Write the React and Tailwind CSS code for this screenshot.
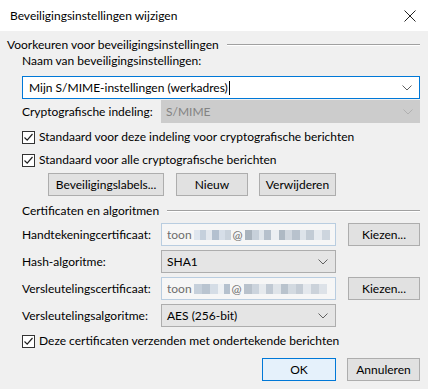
import React from "react";

const font = { fontFamily: 'Lato, "Noto Sans", sans-serif' };

function Chevron({ color = "#606060" }) {
  return (
    <svg width="10" height="6" viewBox="0 0 10 6" className="shrink-0">
      <path d="M0.5 0.5 L5 5 L9.5 0.5" fill="none" stroke={color} strokeWidth="1" />
    </svg>
  );
}

function Check() {
  return (
    <div className="w-[13px] h-[13px] border border-[#333333] bg-white flex items-center justify-center shrink-0">
      <svg width="11" height="11" viewBox="0 0 11 11">
        <path d="M1.5 5.5 L4.2 8.2 L9.5 2" fill="none" stroke="#222" strokeWidth="1.2" />
      </svg>
    </div>
  );
}

function Btn({ children, w, primary }) {
  return (
    <div
      className={`h-[23px] flex items-center justify-center border whitespace-nowrap ${
        primary ? "bg-[#e5f1fb] border-[#0078d7]" : "bg-[#e1e1e1] border-[#adadad]"
      } ${w}`}
    >
      {children}
    </div>
  );
}

function Blur({ blocks }) {
  return (
    <div className="flex items-center h-[12px]">
      {blocks.map((b, i) => (
        <div key={i} style={{ width: b[0], height: b[2] || 10, background: b[1] }} />
      ))}
    </div>
  );
}

function Section({ title }) {
  return (
    <div className="flex items-center h-[16px]">
      <span className="whitespace-nowrap pr-[8px]">{title}</span>
      <div className="flex-1 flex flex-col">
        <div className="h-px bg-[#a0a0a0]" />
        <div className="h-px bg-white" />
      </div>
    </div>
  );
}

function ReadOnly({ children }) {
  return (
    <div className="w-[175px] h-[23px] border border-[#b9cde0] bg-[#f6f6f6] flex items-center pl-[5px] text-[#6d6d6d] overflow-hidden whitespace-nowrap">
      <span>toon</span>
      {children}
    </div>
  );
}

export default function App() {
  return (
    <div className="w-[428px] h-[389px] bg-[#f0f0f0] text-[12px] text-black leading-none" style={font}>
      <div className="h-[31px] bg-white flex items-center justify-between pl-[10px] pr-[12px]">
        <span>Beveiligingsinstellingen wijzigen</span>
        <svg width="12" height="12" viewBox="0 0 12 12">
          <path d="M0.5 0.5 L11.5 11.5 M11.5 0.5 L0.5 11.5" stroke="#222" strokeWidth="1" />
        </svg>
      </div>

      <div className="pl-[7px] pr-[8px] pt-[6px]">
        <Section title="Voorkeuren voor beveiligingsinstellingen" />
        <div className="pl-[15px]">
          <div className="h-[14px] mt-[1px] flex items-center whitespace-nowrap">Naam van beveiligingsinstellingen:</div>
          <div className="mt-[8px] h-[23px] w-[398px] border border-[#0078d7] bg-white flex items-center justify-between pl-[6px] pr-[7px]">
            <span className="flex items-center whitespace-nowrap">
              Mijn S/MIME-instellingen (werkadres)
              <span className="inline-block w-px h-[14px] bg-black ml-px" />
            </span>
            <Chevron />
          </div>

          <div className="mt-[1px] h-[23px] flex items-center">
            <span className="w-[139px] whitespace-nowrap">Cryptografische indeling:</span>
            <div className="w-[259px] h-[23px] bg-[#cccccc] flex items-center justify-between pl-[5px] pr-[7px] text-[#838383]">
              <span>S/MIME</span>
              <Chevron color="#b0b0b0" />
            </div>
          </div>

          <div className="mt-[7px] h-[14px] flex items-center gap-[4px] whitespace-nowrap">
            <Check />
            <span>Standaard voor deze indeling voor cryptografische berichten</span>
          </div>
          <div className="mt-[9px] h-[14px] flex items-center gap-[4px] whitespace-nowrap">
            <Check />
            <span>Standaard voor alle cryptografische berichten</span>
          </div>

          <div className="mt-[6px] flex pl-[26px]">
            <Btn w="w-[116px]">Beveiligingslabels...</Btn>
            <div className="ml-[12px]">
              <Btn w="w-[72px]">Nieuw</Btn>
            </div>
            <div className="ml-[11px]">
              <Btn w="w-[77px]">Verwijderen</Btn>
            </div>
          </div>

          <div className="mt-[7px]">
            <Section title="Certificaten en algoritmen" />
          </div>

          <div className="mt-[4px] flex items-center h-[23px]">
            <span className="w-[139px] whitespace-nowrap">Handtekeningcertificaat:</span>
            <ReadOnly>
              <div className="w-[2px]" />
              <Blur blocks={[[6, "#dfe6ee"], [6, "#c5d0dc"], [6, "#e3e8ee"], [7, "#b3c0cf"], [6, "#d6dee8"], [6, "#c9d2dc"]]} />
              <span className="ml-[2px] mr-[2px]">@</span>
              <Blur blocks={[[7, "#a9b3bd"], [7, "#c7d0da"], [5, "#dfe5eb"], [7, "#b5c0cc"], [8, "#eceff3"], [6, "#aeb9c4"], [7, "#d0d7df"], [8, "#b8c2cd"], [6, "#dde3ea"], [8, "#c2cbd5"], [8, "#e6eaef"], [8, "#cdd5de"]]} />
            </ReadOnly>
            <div className="ml-[12px]">
              <Btn w="w-[72px]">Kiezen...</Btn>
            </div>
          </div>

          <div className="mt-[4px] flex items-center h-[23px]">
            <span className="w-[139px] whitespace-nowrap">Hash-algoritme:</span>
            <div className="w-[175px] h-[23px] bg-[#e5e5e5] border border-[#adadad] flex items-center justify-between pl-[5px] pr-[7px]">
              <span>SHA1</span>
              <Chevron />
            </div>
          </div>

          <div className="mt-[4px] flex items-center h-[23px]">
            <span className="w-[139px] whitespace-nowrap">Versleutelingscertificaat:</span>
            <ReadOnly>
              <div className="w-[2px]" />
              <Blur blocks={[[8, "#c6d0db"], [8, "#b9c4d0"], [8, "#d5dde6"], [6, "#eef1f4"], [6, "#b5c1ce"]]} />
              <span className="ml-[2px] mr-[2px]">@</span>
              <Blur blocks={[[8, "#b9c2cc"], [7, "#ccd4dd"], [7, "#e6eaee"], [7, "#c0c9d3"], [8, "#dfe4e9"], [7, "#b9c3cd"], [8, "#d3dae1"], [7, "#c4ccd5"], [8, "#e4e8ed"], [8, "#cbd2da"], [8, "#dde2e8"]]} />
            </ReadOnly>
            <div className="ml-[12px]">
              <Btn w="w-[72px]">Kiezen...</Btn>
            </div>
          </div>

          <div className="mt-[4px] flex items-center h-[23px]">
            <span className="w-[139px] whitespace-nowrap">Versleutelingsalgoritme:</span>
            <div className="w-[175px] h-[23px] bg-[#e5e5e5] border border-[#adadad] flex items-center justify-between pl-[5px] pr-[7px]">
              <span>AES (256-bit)</span>
              <Chevron />
            </div>
          </div>

          <div className="mt-[7px] h-[14px] flex items-center gap-[4px] whitespace-nowrap">
            <Check />
            <span>Deze certificaten verzenden met ondertekende berichten</span>
          </div>

          <div className="mt-[10px] flex justify-end">
            <Btn w="w-[74px]" primary>OK</Btn>
            <div className="ml-[11px]">
              <Btn w="w-[73px]">Annuleren</Btn>
            </div>
          </div>
        </div>
      </div>
    </div>
  );
}
